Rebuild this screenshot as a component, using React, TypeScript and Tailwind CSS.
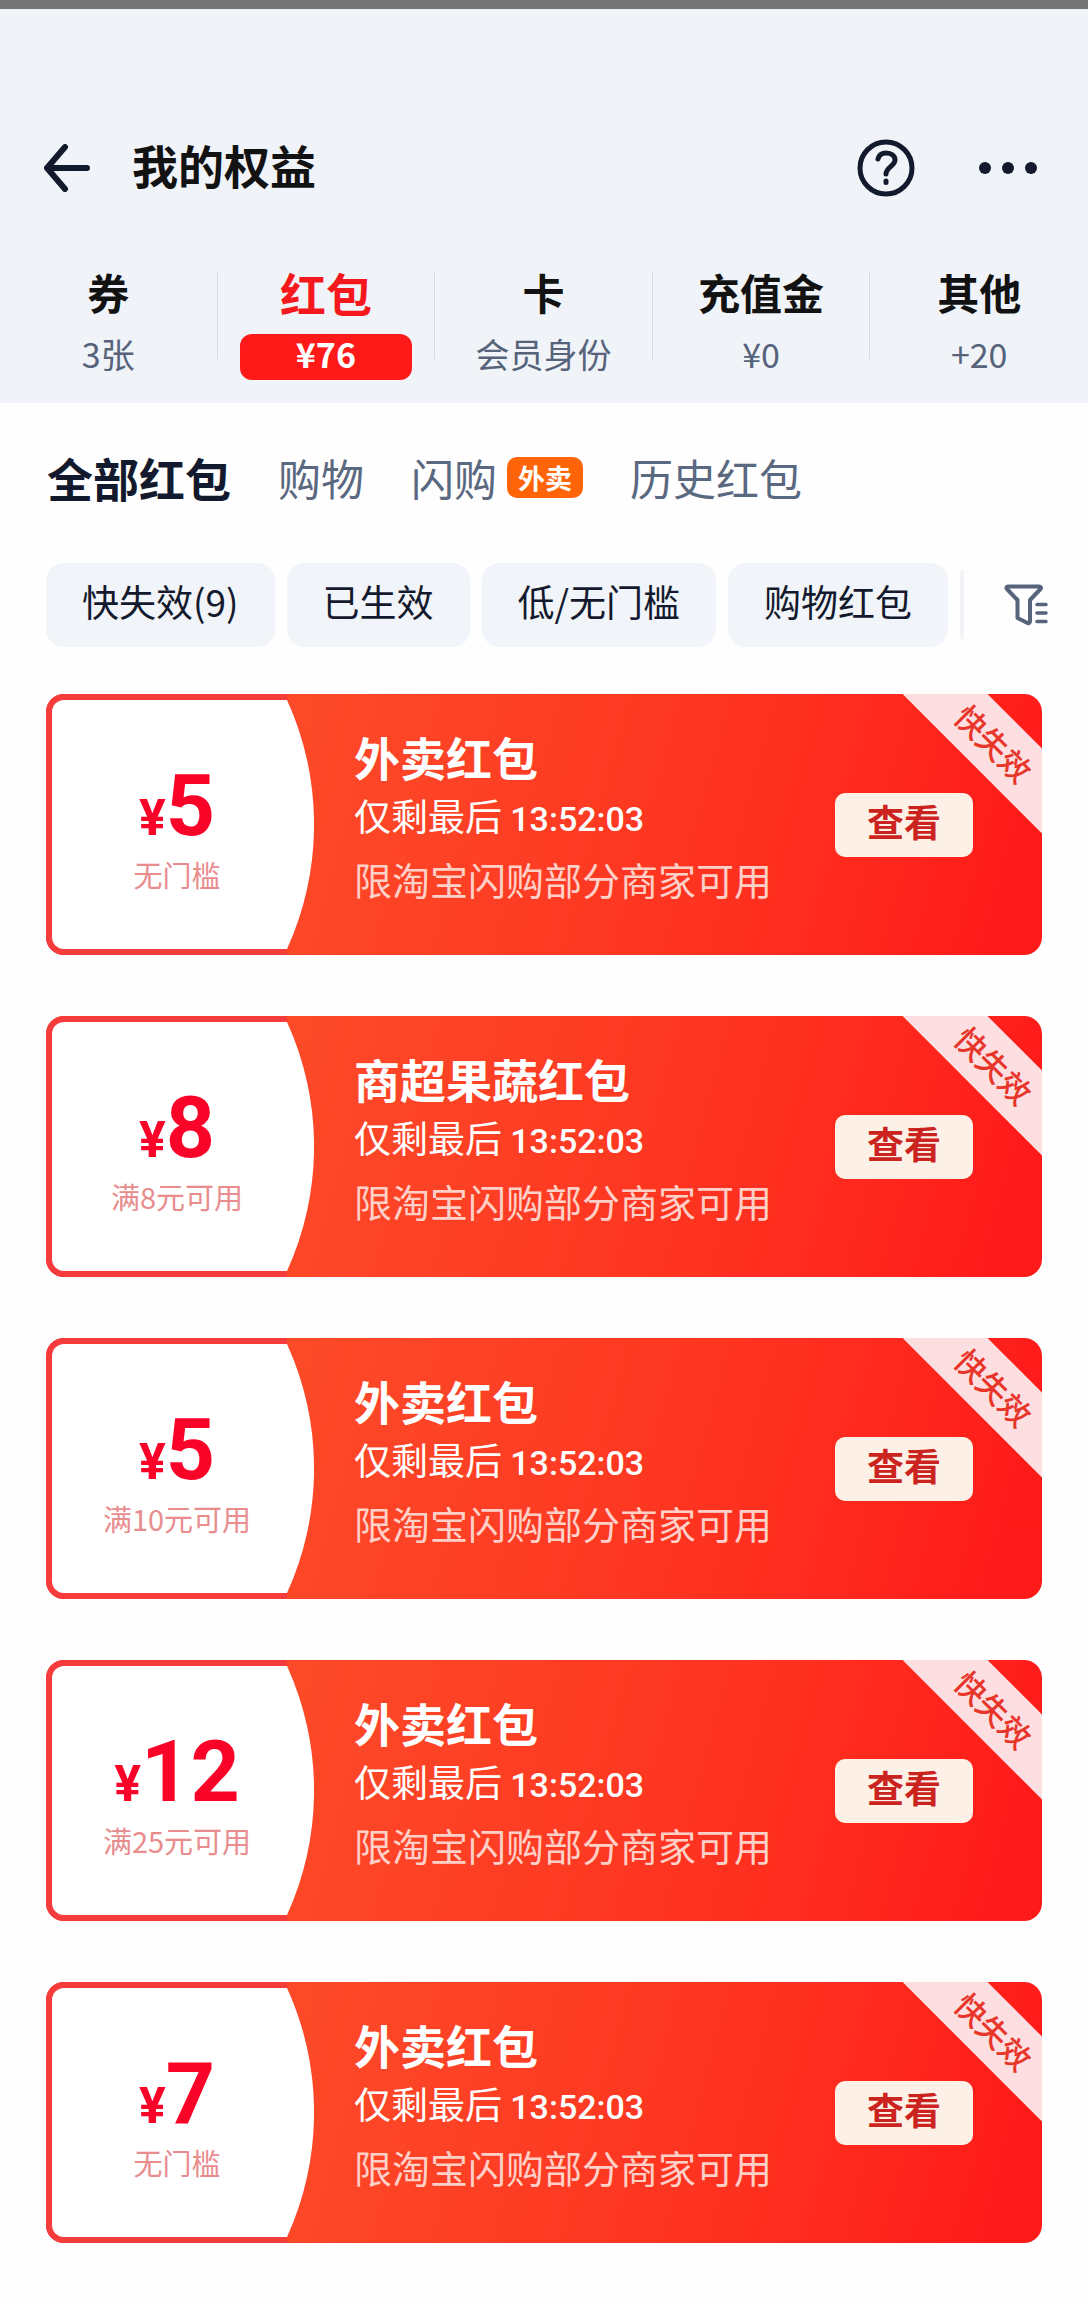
import React from "react";
import clsx from "clsx";

const ASSETS = [
  { label: "券", value: "3张" },
  { label: "红包", value: "¥76", active: true },
  { label: "卡", value: "会员身份" },
  { label: "充值金", value: "¥0" },
  { label: "其他", value: "+20" },
];

const CATEGORIES = [
  { label: "全部红包", active: true },
  { label: "购物" },
  { label: "闪购", badge: "外卖" },
  { label: "历史红包" },
];

const FILTERS = ["快失效(9)", "已生效", "低/无门槛", "购物红包"];

const COUPONS = [
  { id: 1, amount: 5, condition: "无门槛", title: "外卖红包" },
  { id: 2, amount: 8, condition: "满8元可用", title: "商超果蔬红包" },
  { id: 3, amount: 5, condition: "满10元可用", title: "外卖红包" },
  { id: 4, amount: 12, condition: "满25元可用", title: "外卖红包" },
  { id: 5, amount: 7, condition: "无门槛", title: "外卖红包" },
];

function Header() {
  return (
    <header className="flex items-center pt-[125px] pr-[51px] pl-11 text-[#141a2e]">
      <button type="button" aria-label="返回" className="shrink-0">
        <svg viewBox="0 0 46 48" className="h-12 w-[46px]" fill="none" stroke="currentColor" strokeWidth="6" strokeLinecap="round" strokeLinejoin="round">
          <path d="M21 3 3 24l18 21M4 24h39" />
        </svg>
      </button>
      <h1 className="ml-[42px] pb-2 text-[46px] leading-[60px] font-bold text-[#121212]">我的权益</h1>
      <div className="ml-auto flex items-center gap-16">
        <button type="button" aria-label="帮助">
          <svg viewBox="0 0 58 58" className="size-[58px]" fill="none" stroke="currentColor" strokeLinecap="round" strokeLinejoin="round">
            <circle cx="29" cy="29" r="26" strokeWidth="5" />
            <path d="M21 20c1-4 4-6 8-6 5.500 0 9 3 9 7 0 6-9 7.500-9 14" strokeWidth="5" />
            <path d="M29 42v1.500" strokeWidth="5" />
          </svg>
        </button>
        <button type="button" aria-label="更多">
          <svg viewBox="0 0 58 12" className="h-3 w-[58px]" fill="currentColor">
            <circle cx="6" cy="6" r="6" />
            <circle cx="29" cy="6" r="6" />
            <circle cx="52" cy="6" r="6" />
          </svg>
        </button>
      </div>
    </header>
  );
}

function AssetTabs() {
  return (
    <nav aria-label="权益分类" className="mt-[70px] grid grid-cols-5 divide-x divide-[#d5dae2] pb-11">
      {ASSETS.map((asset) => (
        <button key={asset.label} type="button" className="flex h-[87px] flex-col items-center">
          <span
            className={clsx(
              "shrink-0 leading-[40px] font-bold",
              asset.active ? "text-[46px] text-[#f5191d]" : "text-[42px] text-[#121212]"
            )}
          >
            {asset.label}
          </span>
          <span
            className={clsx(
              "mt-[22px] shrink-0 pb-1.5 text-[34px] leading-[40px]",
              asset.active
                ? "w-[172px] rounded-xl bg-[#ff1a1a] font-bold text-white"
                : "text-[#56637b]"
            )}
          >
            {asset.value}
          </span>
        </button>
      ))}
    </nav>
  );
}

function CategoryTabs() {
  return (
    <nav aria-label="红包分类" className="flex items-center gap-[47px] px-[47px] pt-11">
      {CATEGORIES.map((item) => (
        <button key={item.label} type="button" className="flex items-center gap-2.5">
          <span
            className={clsx(
              "leading-[60px]",
              item.active ? "text-[46px] font-bold text-[#141a2e]" : "text-[43px] text-[#5a6880]"
            )}
          >
            {item.label}
          </span>
          {item.badge && (
            <span className="rounded-[10px] bg-[#ff6508] px-[11px] text-[27px] leading-[41px] font-bold text-white">
              {item.badge}
            </span>
          )}
        </button>
      ))}
    </nav>
  );
}

function FilterBar() {
  return (
    <div className="flex items-center gap-3 pt-14 pr-10 pl-[46px]">
      {FILTERS.map((filter) => (
        <button
          key={filter}
          type="button"
          className="rounded-[18px] bg-[#f1f4f8] px-9 pt-2 pb-4 text-[37px] leading-[60px] text-[#141a2e]"
        >
          {filter}
        </button>
      ))}
      <span className="h-[70px] w-1 rounded-l-full bg-[#f1f3f6]" aria-hidden="true" />
      <button type="button" aria-label="筛选" className="ml-auto text-[#56637b]">
        <svg viewBox="0 0 44 42" className="h-[42px] w-11" fill="none" stroke="currentColor" strokeWidth="4" strokeLinecap="round" strokeLinejoin="round">
          <path d="M4 2.500h31c2 0 2.500 1.500 1.500 2.500L26 16v21c0 2-1 2.500-2.500 2L13.500 34V16L3 5C2 4 2.500 2.500 4 2.500Z" />
          <path d="M33 20.500h9M33 29h9M33 37.500h9" strokeWidth="3.500" />
        </svg>
      </button>
    </div>
  );
}

function CouponCard({ coupon }: { coupon: (typeof COUPONS)[number] }) {
  return (
    <li className="relative flex h-[261px] overflow-hidden rounded-[18px] bg-linear-105 from-[#fc4e2a] from-15% to-[#ff1a1a] to-95%">
      <div className="relative w-[268px] shrink-0">
        <svg viewBox="0 0 268 261" className="absolute inset-0 size-full" aria-hidden="true">
          <path d="M0 0h241v261H0Z" fill="#f53b3c" />
          <path d="M18 6h223A300 300 0 0 1 241 255H18A12 12 0 0 1 6 243V18A12 12 0 0 1 18 6Z" fill="#fff" />
        </svg>
        <div className="relative flex flex-col items-center pt-[72px] pr-1.5">
          <p className="flex items-baseline font-['Roboto',sans-serif] leading-[80px] font-bold text-[#fa0328]">
            <span className="text-[50px]">¥</span>
            <span className="text-[86px]">{coupon.amount}</span>
          </p>
          <p className="text-[29px] leading-[32px] text-[#e88c8e]">{coupon.condition}</p>
        </div>
      </div>
      <div className="ml-10 flex-1 pt-8 text-white">
        <h2 className="text-[46px] leading-[60px] font-bold">{coupon.title}</h2>
        <p className="text-[37px] leading-[58px]">
          仅剩最后 <time className="font-['Roboto',sans-serif] text-[34px] font-medium">13:52:03</time>
        </p>
        <p className="text-[38px] leading-[62px] text-[#ffd0c8]">限淘宝闪购部分商家可用</p>
      </div>
      <button
        type="button"
        className="mr-[69px] self-center rounded-[10px] bg-[#fdf0e6] px-8 pb-2 text-[37px] leading-[56px] font-bold text-[#cb2420]"
      >
        查看
      </button>
      <span className="absolute top-[19px] -right-[72px] w-[240px] rotate-45 bg-[#fddfe2] text-center text-[31px] leading-[60px] font-medium text-[#e8352a]">
        快失效
      </span>
    </li>
  );
}

export default function App() {
  return (
    <div className="min-h-screen bg-[#fefefe] pb-14 font-['Noto_Sans_CJK_SC',sans-serif]">
      <div className="border-t-[9px] border-[#757575] bg-[#f0f4f8]">
        <Header />
        <AssetTabs />
      </div>
      <main>
        <CategoryTabs />
        <FilterBar />
        <ul className="mt-[47px] flex flex-col gap-[61px] px-[46px]">
          {COUPONS.map((coupon) => (
            <CouponCard key={coupon.id} coupon={coupon} />
          ))}
        </ul>
      </main>
    </div>
  );
}
